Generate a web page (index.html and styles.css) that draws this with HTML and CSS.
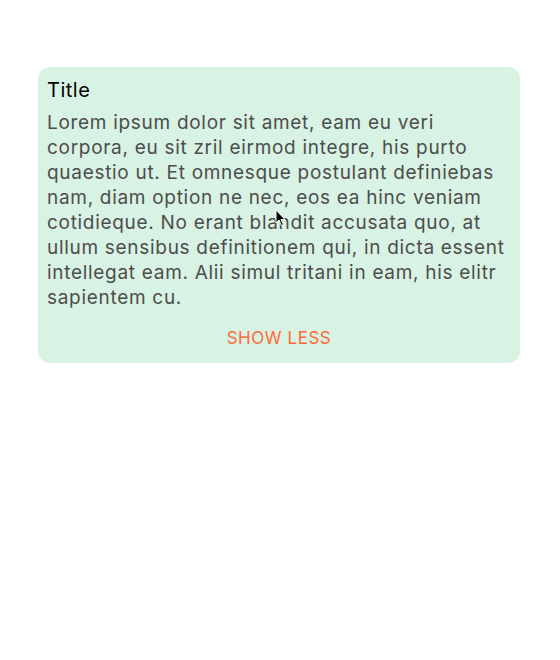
FILE: index.html
```html
<!DOCTYPE html>
<html>
<head>
<meta charset="utf-8">
<link rel="stylesheet" href="styles.css">
</head>
<body>
<div class="page">
  <div class="card">
    <div class="title">Title</div>
    <p class="body">Lorem ipsum dolor sit amet, eam eu veri corpora, eu sit zril eirmod integre, his purto quaestio ut. Et omnesque postulant definiebas nam, diam option ne nec, eos ea hinc veniam cotidieque. No erant blandit accusata quo, at ullum sensibus definitionem qui, in dicta essent intellegat eam. Alii simul tritani in eam, his elitr sapientem cu.</p>
    <div class="actions"><span class="btn">SHOW LESS</span></div>
  </div>
</div>
<svg class="cursor" width="12" height="18" viewBox="0 0 12 18"><path d="M1 1 L1 14 L4 11 L6.5 16.5 L8.5 15.5 L6 10.5 L10 10.5 Z" fill="#000" stroke="#fff" stroke-width="1"/></svg>
</body>
</html>
```
FILE: styles.css
```css
html, body {
  margin: 0;
  padding: 0;
  background: #fff;
}
body {
  font-family: Inter, "Open Sans", sans-serif;
  position: relative;
  width: 560px;
  height: 660px;
}
.page {
  padding: 67px 40px 0 38px;
}
.card {
  background: #d8f2e3;
  border-radius: 12px;
  padding: 10px 6px 14px 9px;
}
.title {
  font-size: 20px;
  line-height: 26px;
  color: #000;
  letter-spacing: 0.5px;
}
.body {
  margin: 7px 0 0 0;
  font-size: 19px;
  line-height: 25px;
  color: #4d4d4d;
  letter-spacing: 0.7px;
}
.actions {
  display: flex;
  justify-content: center;
  margin-top: 17px;
  padding-right: 3px;
}
.btn {
  font-size: 17px;
  line-height: 22px;
  color: #ff6a3a;
  letter-spacing: 0.55px;
}
.cursor {
  position: absolute;
  left: 275px;
  top: 209px;
}
```
